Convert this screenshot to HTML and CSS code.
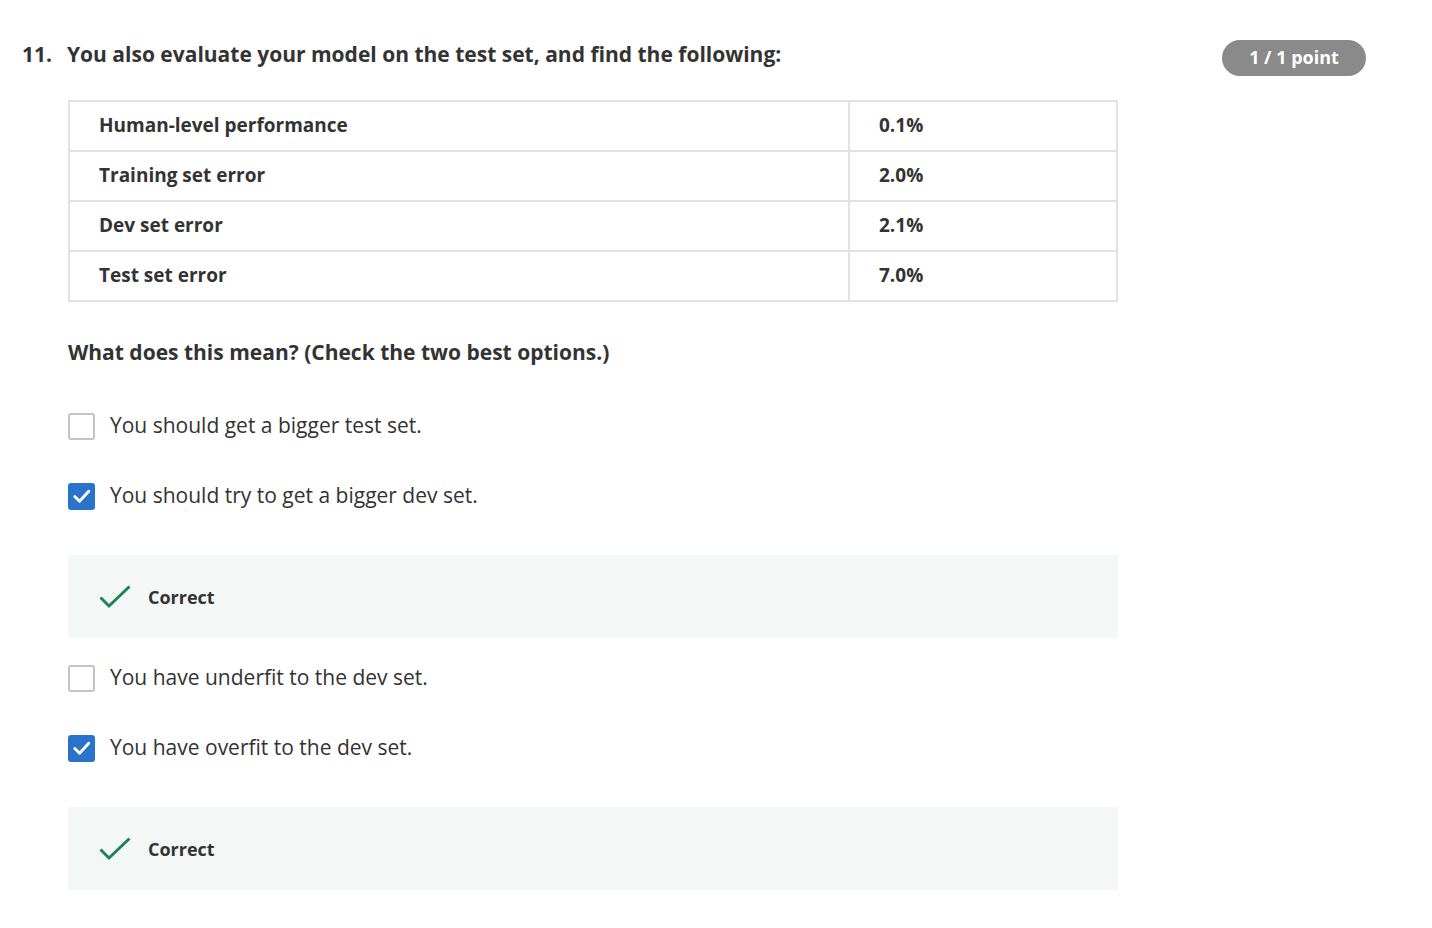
FILE: index.html
```html
<!DOCTYPE html>
<html>
<head>
<meta charset="utf-8">
<link rel="stylesheet" href="styles.css">
</head>
<body>
<div class="question">
  <div class="q-head">
    <div class="q-num">11.</div>
    <div class="q-title">You also evaluate your model on the test set, and find the following:</div>
    <div class="badge">1 / 1 point</div>
  </div>
  <div class="q-body">
    <table class="data">
      <tr><td class="c1">Human-level performance</td><td class="c2">0.1%</td></tr>
      <tr><td class="c1">Training set error</td><td class="c2">2.0%</td></tr>
      <tr><td class="c1">Dev set error</td><td class="c2">2.1%</td></tr>
      <tr><td class="c1">Test set error</td><td class="c2">7.0%</td></tr>
    </table>
    <div class="prompt">What does this mean? (Check the two best options.)</div>
    <div class="options">
      <div class="option"><span class="box"></span><span class="label">You should get a bigger test set.</span></div>
      <div class="option"><span class="box checked"><svg viewBox="0 0 28 28" width="28" height="28"><path d="M7 14.5 L12 19.5 L21.5 9" fill="none" stroke="#fff" stroke-width="3" stroke-linecap="round" stroke-linejoin="round"/></svg></span><span class="label">You should try to get a bigger dev set.</span></div>
      <div class="feedback"><svg class="tick" viewBox="0 0 32 24" width="32" height="24"><path d="M1.5 12.5 L10 21 L30.5 1.5" fill="none" stroke="#1f8354" stroke-width="3"/></svg><span>Correct</span></div>
      <div class="option"><span class="box"></span><span class="label">You have underfit to the dev set.</span></div>
      <div class="option"><span class="box checked"><svg viewBox="0 0 28 28" width="28" height="28"><path d="M7 14.5 L12 19.5 L21.5 9" fill="none" stroke="#fff" stroke-width="3" stroke-linecap="round" stroke-linejoin="round"/></svg></span><span class="label">You have overfit to the dev set.</span></div>
      <div class="feedback"><svg class="tick" viewBox="0 0 32 24" width="32" height="24"><path d="M1.5 12.5 L10 21 L30.5 1.5" fill="none" stroke="#1f8354" stroke-width="3"/></svg><span>Correct</span></div>
    </div>
  </div>
</div>
</body>
</html>
```
FILE: styles.css
```css
* { box-sizing: border-box; }
html, body { margin: 0; background: #fff; }
body {
  font-family: "Open Sans", "Noto Sans", "Liberation Sans", sans-serif;
  color: #1f1f1f;
}
.question {
  padding: 40px 66px 0 22px;
}
.q-head {
  display: flex;
  align-items: flex-start;
}
.q-num {
  width: 45px;
  font-size: 21px;
  font-weight: 700;
  line-height: 28px;
  color: #333;
}
.q-title {
  flex: 1;
  font-size: 21px;
  font-weight: 700;
  line-height: 28px;
  color: #333;
}
.badge {
  width: 144px;
  height: 36px;
  border-radius: 18px;
  background: #8a8a8a;
  color: #fff;
  font-size: 18px;
  font-weight: 700;
  display: flex;
  align-items: center;
  justify-content: center;
  padding-bottom: 2px;
}
.q-body {
  margin-left: 46px;
  width: 1050px;
}
.data {
  margin-top: 24px;
  width: 1050px;
  border-collapse: collapse;
}
.data td {
  border: 2px solid #e1e1e1;
  height: 50px;
  padding: 0 0 3px 29px;
  font-size: 19px;
  font-weight: 700;
  color: #333;
}
.data td.c1 { width: 780px; }
.prompt {
  margin-top: 36px;
  font-size: 21px;
  font-weight: 700;
  line-height: 28px;
  color: #333;
}
.options {
  margin-top: 40px;
  display: flex;
  flex-direction: column;
}
.option {
  display: flex;
  align-items: center;
  height: 40px;
  margin-bottom: 30px;
}
.box {
  width: 27px;
  height: 27px;
  border: 2px solid #c4c4c4;
  border-radius: 3px;
  margin-right: 15px;
  flex: none;
  display: flex;
  align-items: center;
  justify-content: center;
  background: #fff;
}
.box.checked {
  border: none;
  background: #2a73cc;
}
.label {
  font-size: 21px;
  color: #333;
  margin-top: -2px;
}
.feedback {
  margin-top: 9px;
  margin-bottom: 20px;
  height: 83px;
  background: #f3f8f6;
  display: flex;
  align-items: center;
  padding-left: 31px;
  font-size: 18px;
  font-weight: 700;
  color: #333;
}
.tick {
  margin-right: 17px;
}
```
